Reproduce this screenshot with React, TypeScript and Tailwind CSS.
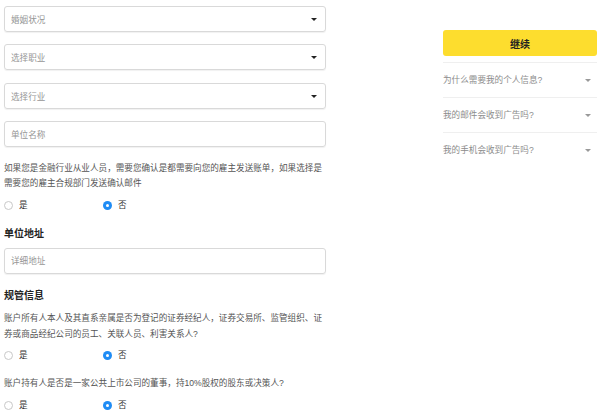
const font = "font-['Liberation_Sans','Noto_Sans_CJK_SC',sans-serif]";

const Field = ({ label, arrow, className }: { label: string; arrow?: boolean; className?: string }) => (
  <div
    className={`flex h-[26px] items-center justify-between rounded-[3px] border border-[#d9d9d9] pl-[6px] pr-[8px] shadow-[0_1px_1px_rgba(0,0,0,0.06)] ${className ?? ""}`}
  >
    <span className="pt-[2px] text-[8.6px] text-[#969696]">{label}</span>
    {arrow && <span className="h-0 w-0 border-x-[3px] border-t-[3px] border-x-transparent border-t-[#222]" />}
  </div>
);

const YesNo = ({ className }: { className?: string }) => (
  <div className={`flex items-center text-[8.6px] text-[#333] ${className ?? ""}`}>
    <div className="flex w-[99px] items-center gap-[6px]">
      <span className="h-[9px] w-[9px] rounded-full border border-[#c8c8c8]" />
      <span>是</span>
    </div>
    <div className="flex items-center gap-[6px]">
      <span className="flex h-[9px] w-[9px] items-center justify-center rounded-full bg-[#1f8cf5]">
        <span className="h-[3px] w-[3px] rounded-full bg-white" />
      </span>
      <span>否</span>
    </div>
  </div>
);

const Question = ({ text }: { text: string }) => (
  <div className="flex h-[35px] items-center justify-between border-t border-[#efefef] pr-[6px] text-[8.6px] text-[#8c8c8c]">
    <span>{text}</span>
    <span className="h-0 w-0 border-x-[3px] border-t-[3px] border-x-transparent border-t-[#999]" />
  </div>
);

export default function App() {
  return (
    <div className={`flex h-[415px] w-[600px] justify-between overflow-hidden bg-white pl-[4px] pr-[3px] ${font}`}>
      <div className="w-[322px] pt-[6px]">
        <Field label="婚姻状况" arrow />
        <Field label="选择职业" arrow className="mt-[12px]" />
        <Field label="选择行业" arrow className="mt-[13px]" />
        <Field label="单位名称" className="mt-[12px]" />

        <p className="mt-[14px] text-[8.6px] leading-[15px] text-[#555]">
          如果您是金融行业从业人员，需要您确认是都需要向您的雇主发送账单，如果选择是需要您的雇主合规部门发送确认邮件
        </p>
        <YesNo className="mt-[8px]" />

        <h2 className="mt-[15px] text-[10px] font-bold leading-[14px] text-[#222]">单位地址</h2>
        <Field label="详细地址" className="mt-[7px]" />

        <h2 className="mt-[15px] text-[10px] font-bold leading-[14px] text-[#222]">规管信息</h2>
        <p className="mt-[7px] text-[8.6px] leading-[16px] text-[#555]">
          账户所有人本人及其直系亲属是否为登记的证券经纪人，证券交易所、监管组织、证券或商品经纪公司的员工、关联人员、利害关系人?
        </p>
        <YesNo className="mt-[7px]" />
        <p className="mt-[14px] text-[8.6px] leading-[15px] text-[#555]">
          账户持有人是否是一家公共上市公司的董事，持10%股权的股东或决策人?
        </p>
        <YesNo className="mt-[8px]" />
      </div>

      <div className="w-[154px] pt-[30px]">
        <button className="flex h-[26px] w-full items-center justify-center rounded-[3px] bg-[#fddd2e] pt-[2px] text-[10px] font-bold text-[#222]">
          继续
        </button>
        <div className="mt-[6px]">
          <Question text="为什么需要我的个人信息?" />
          <Question text="我的邮件会收到广告吗?" />
          <Question text="我的手机会收到广告吗?" />
        </div>
      </div>
    </div>
  );
}
